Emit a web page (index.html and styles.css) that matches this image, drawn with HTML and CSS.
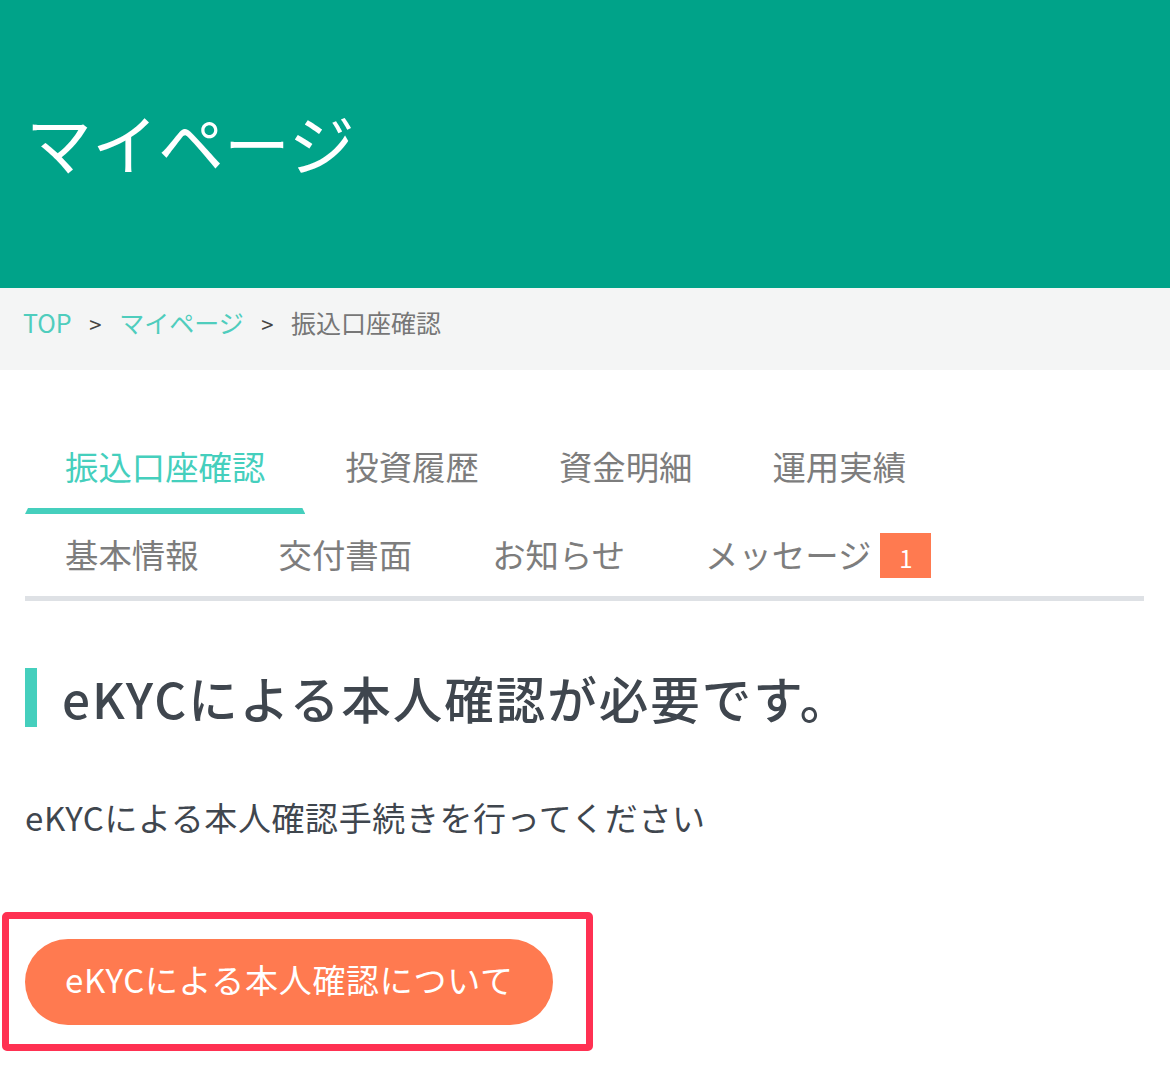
FILE: index.html
```html
<!DOCTYPE html>
<html lang="ja">
<head>
  <meta charset="UTF-8">
  <meta name="viewport" content="width=device-width, initial-scale=1.0">
  <title>マイページ</title>
  <link rel="stylesheet" href="styles.css">
</head>
<body>

  <header class="page-header">
    <h1>マイページ</h1>
  </header>

  <div class="breadcrumb">
    <a href="#">TOP</a>
    <span class="sep">&gt;</span>
    <a href="#">マイページ</a>
    <span class="sep">&gt;</span>
    <span class="current">振込口座確認</span>
  </div>

  <div class="container">
    <nav class="tabs">
      <div class="tab-row first">
        <a class="tab active" href="#">振込口座確認</a>
        <a class="tab" href="#">投資履歴</a>
        <a class="tab" href="#">資金明細</a>
        <a class="tab" href="#">運用実績</a>
      </div>
      <div class="tab-row second">
        <a class="tab" href="#">基本情報</a>
        <a class="tab" href="#">交付書面</a>
        <a class="tab" href="#">お知らせ</a>
        <a class="tab" href="#">メッセージ<span class="badge">1</span></a>
      </div>
    </nav>

    <!-- eKYC notice -->
    <h2 class="section-title">eKYCによる本人確認が必要です。</h2>
    <p class="lead">eKYCによる本人確認手続きを行ってください</p>

    <div class="highlight">
      <a class="ekyc-button" href="#">eKYCによる本人確認について</a>
    </div>
  </div>

</body>
</html>
```

FILE: styles.css
```css
body {
  margin: 0;
  font-family: "Noto Sans CJK JP", "Noto Sans", sans-serif;
  background: #fff;
  color: #3f464e;
}
a {
  text-decoration: none;
}
.page-header {
  height: 288px;
  background: #00a389;
  display: flex;
  align-items: center;
  padding: 0 0 6px 26px;
  box-sizing: border-box;
}
.page-header h1 {
  margin: 0;
  color: #fff;
  font-size: 66px;
  font-weight: 400;
  line-height: 1;
}
.breadcrumb {
  height: 82px;
  box-sizing: border-box;
  padding: 14px 23px 0;
  background: #f4f5f5;
  font-size: 25px;
  line-height: 40px;
}
.breadcrumb a {
  color: #4fcdbd;
}
.breadcrumb .sep {
  margin: 0 12px;
  color: #444;
  font-size: 22px;
}
.breadcrumb .current {
  color: #777;
}
.container {
  padding: 60px 26px 60px 25px;
}
.tabs {
  border-bottom: 5px solid #dee1e5;
}
.tab-row {
  display: flex;
}
.tab {
  position: relative;
  display: flex;
  align-items: center;
  padding: 0 40px;
  font-size: 33.4px;
  line-height: 48px;
  color: #7d7d7d;
}
.tab-row.first .tab {
  padding-top: 12px;
  padding-bottom: 24px;
}
.tab-row.second .tab {
  padding-top: 15px;
  padding-bottom: 18px;
}
.tab.active {
  color: #45cfbd;
}
.tab.active::after {
  content: "";
  position: absolute;
  left: 0;
  right: 0;
  bottom: 0;
  height: 6px;
  background: #45cfbd;
  clip-path: polygon(3px 0, calc(100% - 3px) 0, 100% 100%, 0 100%);
}
.badge {
  display: inline-block;
  width: 51px;
  height: 45px;
  margin: 4px 0 0 9px;
  background: #ff7a50;
  color: #fff;
  font-size: 24px;
  line-height: 49px;
  text-align: center;
}
.section-title {
  margin: 67px 0 0;
  padding-left: 25px;
  border-left: 12px solid #45cfbd;
  font-size: 49.5px;
  font-weight: 500;
  line-height: 59px;
  letter-spacing: 2px;
  color: #3f464e;
}
.lead {
  margin: 68px 0 0;
  font-size: 33px;
  line-height: 45px;
  letter-spacing: 0.6px;
}
.highlight {
  display: inline-block;
  margin: 72px 0 0 -23px;
  padding: 20px 33px 19px 16px;
  border: 7px solid #ff3152;
  border-radius: 5px;
}
.ekyc-button {
  display: flex;
  align-items: center;
  width: 528px;
  height: 86px;
  box-sizing: border-box;
  padding: 0 0 6px 40px;
  border-radius: 43px;
  background: #ff7a50;
  color: #fff;
  font-size: 33px;
  font-weight: 400;
  letter-spacing: 0.7px;
}
```
